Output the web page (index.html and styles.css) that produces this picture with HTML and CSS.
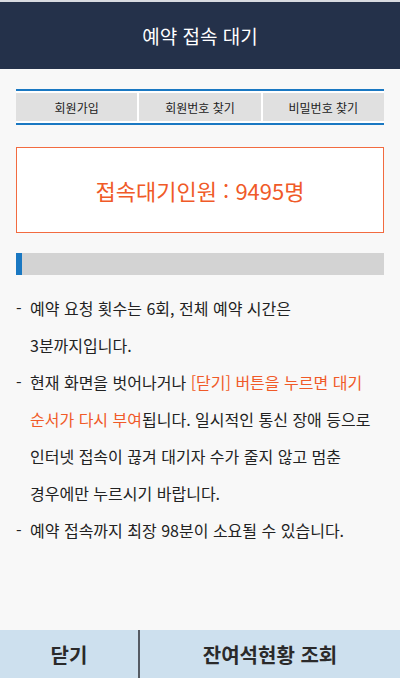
FILE: index.html
```html
<!DOCTYPE html>
<html lang="ko">
<head>
<meta charset="utf-8">
<title>예약 접속 대기</title>
<link rel="stylesheet" href="styles.css">
</head>
<body>
<div class="page">
  <header class="header">예약 접속 대기</header>
  <main class="content">
    <nav class="tabs">
      <div class="tab">회원가입</div>
      <div class="tab">회원번호 찾기</div>
      <div class="tab">비밀번호 찾기</div>
    </nav>
    <div class="count-box">접속대기인원 : 9495명</div>
    <div class="progress"><div class="progress-fill" style="width:6px"></div></div>
    <ul class="notes">
      <li>예약 요청 횟수는 6회, 전체 예약 시간은 3분까지입니다.</li>
      <li>현재 화면을 벗어나거나 <span class="hl">[닫기] 버튼을 누르면 대기 순서가 다시 부여</span>됩니다. 일시적인 통신 장애 등으로 인터넷 접속이 끊겨 대기자 수가 줄지 않고 멈춘 경우에만 누르시기 바랍니다.</li>
      <li>예약 접속까지 최장 98분이 소요될 수 있습니다.</li>
    </ul>
  </main>
  <footer class="footer">
    <div class="btn btn-close">닫기</div>
    <div class="btn btn-seat">잔여석현황 조회</div>
  </footer>
</div>
</body>
</html>
```
FILE: styles.css
```css
* { box-sizing: border-box; }
html, body { margin: 0; padding: 0; }
body {
  font-family: "Noto Sans CJK KR", "Noto Sans", sans-serif;
  background: #f8f8f8;
  color: #222;
}
.page {
  width: 400px;
  height: 678px;
  display: flex;
  flex-direction: column;
  background: #f8f8f8;
}
.header {
  height: 69px;
  border-top: 2px solid #d8dae0;
  background: #24314a;
  color: #fff;
  font-size: 19px;
  display: flex;
  align-items: center;
  justify-content: center;
  padding-bottom: 1px;
}
.content {
  flex: 1;
  padding: 20px 16px 0;
}
.tabs {
  display: flex;
  gap: 2px;
  border-top: 2px solid #1a78c2;
  border-bottom: 2px solid #1a78c2;
  padding: 2px 0;
  background: #fff;
  height: 36px;
}
.tab {
  flex: 1;
  background: #e0e0e0;
  display: flex;
  align-items: center;
  justify-content: center;
  font-size: 12px;
  color: #222;
}
.count-box {
  margin-top: 22px;
  height: 86px;
  border: 1px solid #f26b40;
  background: #fff;
  color: #f05a28;
  font-size: 22px;
  display: flex;
  align-items: center;
  justify-content: center;
}
.progress {
  margin-top: 20px;
  height: 22px;
  background: #d3d3d3;
  display: flex;
}
.progress-fill {
  background: #1a78c2;
  height: 100%;
}
.notes {
  list-style: none;
  margin: 15px 0 0;
  padding: 0;
  font-size: 16px;
  line-height: 37px;
  word-break: keep-all;
}
.notes li {
  position: relative;
  padding-left: 14px;
}
.notes li::before {
  content: "-";
  position: absolute;
  left: 0;
  top: 0;
}
.hl { color: #f05a28; }
.footer {
  height: 48px;
  background: #cde0ee;
  display: flex;
}
.btn {
  display: flex;
  align-items: center;
  justify-content: center;
  font-size: 20px;
  font-weight: bold;
  color: #2a2a2a;
}
.btn-close {
  width: 140px;
  border-right: 2px solid #555b63;
}
.btn-seat { flex: 1; }
```
